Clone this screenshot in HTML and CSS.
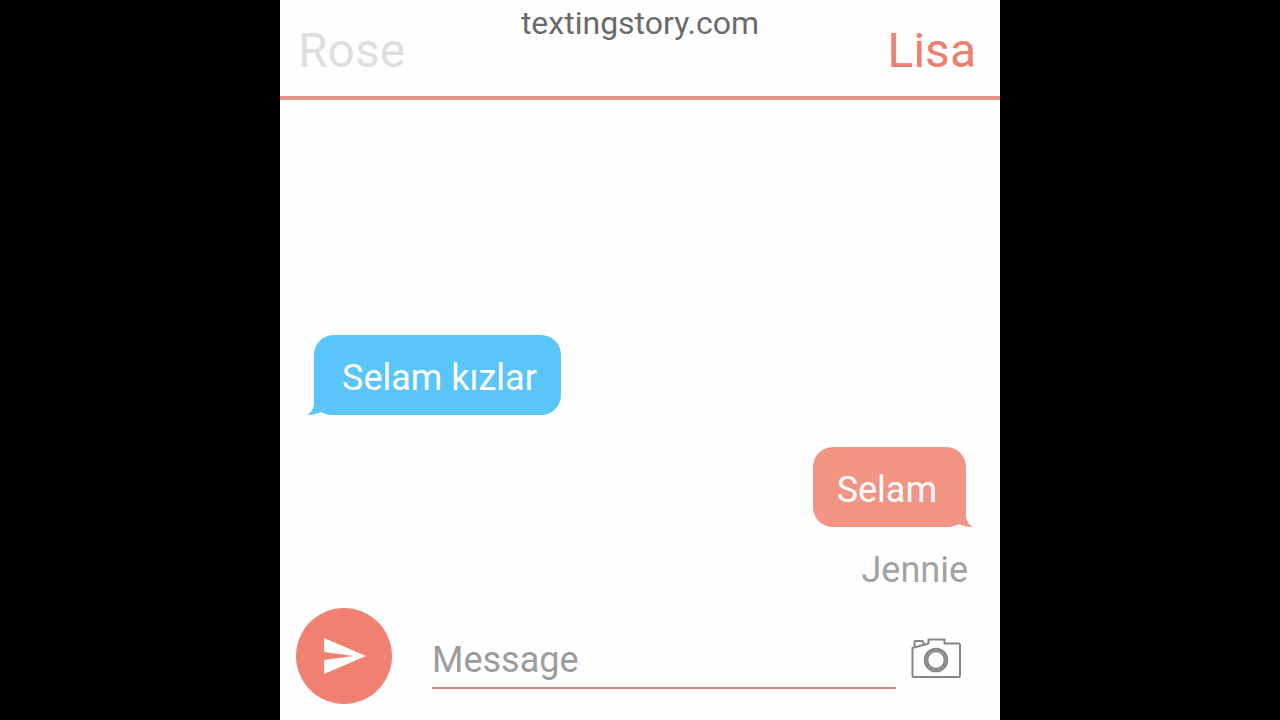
FILE: index.html
```html
<!DOCTYPE html>
<html lang="tr">
<head>
<meta charset="utf-8">
<meta name="viewport" content="width=device-width, initial-scale=1">
<title>TextingStory</title>
<link rel="stylesheet" href="styles.css">
</head>
<body>
<main class="chat">
  <header class="header">
    <button class="name name-left" type="button">Rose</button>
    <p class="site">textingstory.com</p>
    <button class="name name-right" type="button">Lisa</button>
  </header>
  <section class="messages">
    <p class="bubble bubble-in">Selam kızlar
      <svg class="tail" viewBox="0 0 28 20" aria-hidden="true"><path d="M7 0V9Q6 17 0 20Q8 20 14 17Q18 20 28 20V0Z"/></svg>
    </p>
    <p class="bubble bubble-out">Selam
      <svg class="tail" viewBox="0 0 28 20" aria-hidden="true"><path d="M7 0V9Q6 17 0 20Q8 20 14 17Q18 20 28 20V0Z"/></svg>
    </p>
    <p class="sender">Jennie</p>
  </section>
  <form class="composer">
    <button class="send" type="button" aria-label="Send">
      <svg viewBox="0 0 96 96" aria-hidden="true"><path d="M28 30 70 48 28 66V52L58 48 28 44Z"/></svg>
    </button>
    <input class="field" type="text" placeholder="Message" aria-label="Message">
    <button class="camera" type="button" aria-label="Add photo">
      <svg viewBox="0 0 52 42" aria-hidden="true">
        <path d="M2.500 39V11L18.500 6.500V2.500H34.500V6.500H48.500Q50 6.500 50 8V38.500Q50 40 48.500 40H3.500Q2.500 40 2.500 39Z"/>
        <path d="M4.500 10V5Q4.500 4 5.500 4H12.500L14 7"/>
        <circle class="ring" cx="26" cy="23" r="10"/>
        <circle cx="26" cy="23" r="11.300"/>
        <circle cx="26" cy="23" r="8.700"/>
      </svg>
    </button>
  </form>
</main>
</body>
</html>
```
FILE: styles.css
```css
* {
  box-sizing: border-box;
}

body {
  margin: 0;
  background: #000;
  font-family: Roboto, "Liberation Sans", sans-serif;
}

p {
  margin: 0;
}

button {
  padding: 0;
  border: 0;
  background: none;
  font: inherit;
}

.chat {
  display: flex;
  flex-direction: column;
  width: min(100%, 100vh);
  min-height: 100vh;
  margin: 0 auto;
  background: #fefefe;
}

.header {
  display: grid;
  grid-template-columns: 1fr auto 1fr;
  align-items: start;
  padding: 3px 0 16px;
  border-bottom: 4px solid #e69488;
}

.name {
  padding-top: 19px;
  font-size: 48px;
  line-height: 58px;
}

.name-left {
  justify-self: start;
  padding-left: 18px;
  color: #dedede;
}

.name-right {
  justify-self: end;
  padding-right: 24px;
  color: #ec8070;
}

.site {
  color: #6a6a6a;
  font-size: 32px;
  line-height: 40px;
}

.messages {
  display: flex;
  flex: 1;
  flex-direction: column;
  justify-content: flex-end;
  padding: 0 32px 14px 34px;
  font-size: 36px;
}

.bubble {
  position: relative;
  margin-bottom: 32px;
  padding: 19px 24px 13px;
  border-radius: 20px;
  color: #fff;
  line-height: 48px;
}

.bubble-in {
  align-self: flex-start;
  padding-left: 28px;
  background: #5ac5f8;
  fill: #5ac5f8;
}

.bubble-out {
  align-self: flex-end;
  margin-right: 2px;
  margin-bottom: 19px;
  padding-right: 29px;
  background: #f29484;
  fill: #f29484;
}

.tail {
  position: absolute;
  bottom: 0;
  left: -7px;
  width: 28px;
  height: 20px;
}

.bubble-out .tail {
  right: -7px;
  left: auto;
  transform: scaleX(-1);
}

.sender {
  align-self: flex-end;
  color: #a2a2a2;
  line-height: 48px;
}

.composer {
  display: flex;
  align-items: center;
  padding: 0 38px 16px 16px;
}

.send {
  flex: none;
  width: 96px;
  height: 96px;
  margin-right: 40px;
  border-radius: 50%;
  background: #f28070;
}

.send svg {
  display: block;
  fill: #fff;
}

.field {
  flex: 1;
  align-self: flex-end;
  min-width: 0;
  height: 64px;
  margin-bottom: 15px;
  padding: 8px 0 0;
  border: 0;
  border-bottom: 2px solid #d8897b;
  outline: 0;
  background: none;
  color: #555;
  font: 36px Roboto, "Liberation Sans", sans-serif;
}

.field::placeholder {
  color: #9c9c9c;
  opacity: 1;
}

.camera {
  flex: none;
  width: 52px;
  height: 42px;
  margin: 4px 0 0 14px;
}

.camera svg {
  display: block;
  fill: none;
  stroke: #858585;
  stroke-width: 2;
  stroke-linejoin: round;
}

.camera .ring {
  stroke: #aaa;
}
```
